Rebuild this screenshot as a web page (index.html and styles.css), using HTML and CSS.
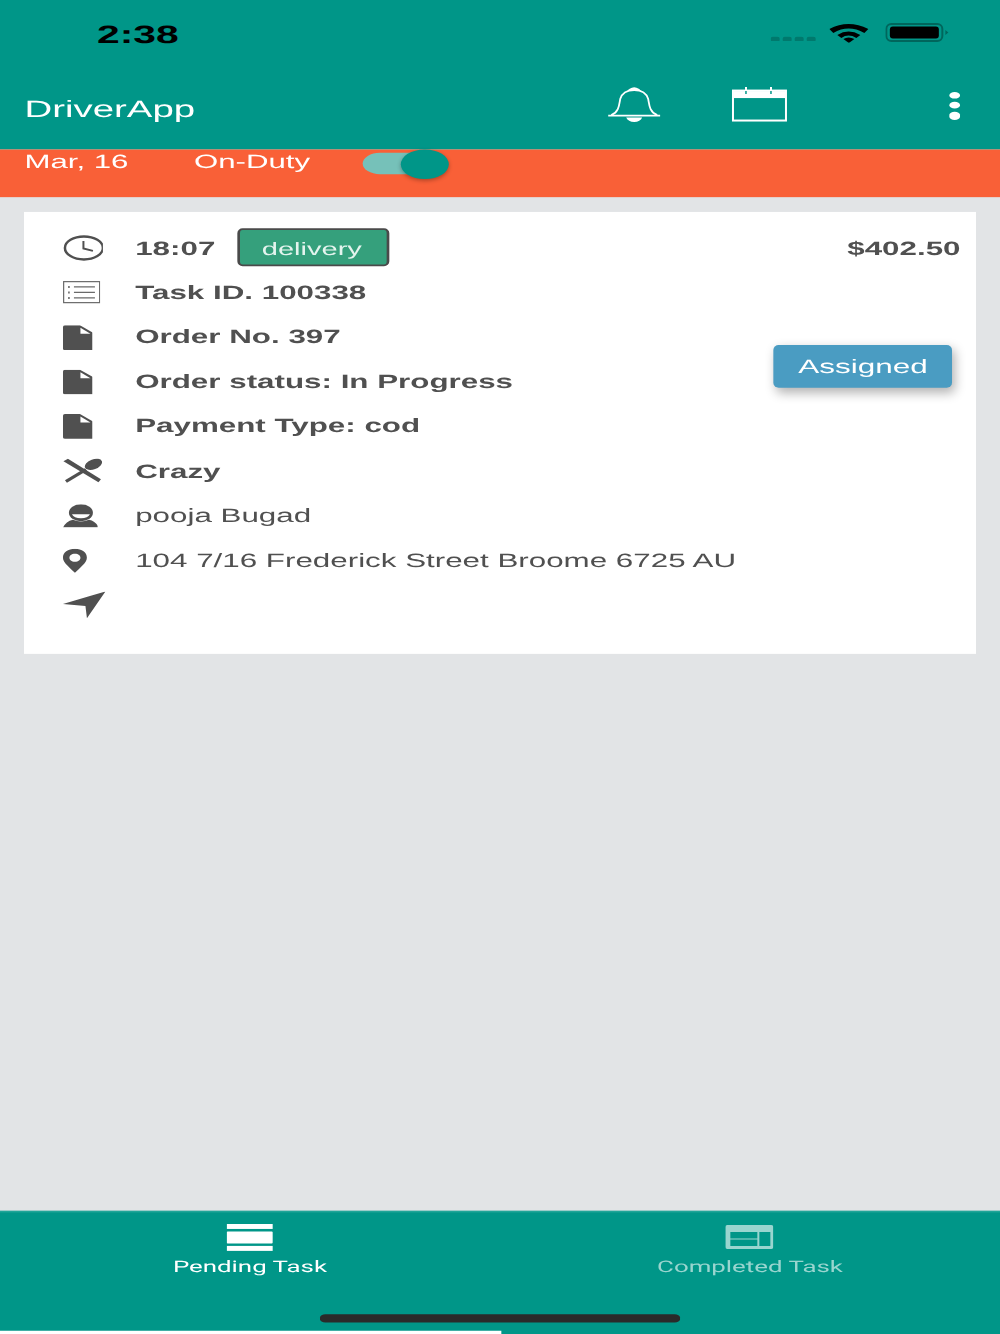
FILE: index.html
```html
<!DOCTYPE html>
<html lang="en">
<head>
    <meta charset="UTF-8">
    <meta name="viewport" content="width=device-width, initial-scale=1.0">
    <title>DriverApp</title>
    <link rel="stylesheet" href="styles.css">
</head>
<body>
    <div class="phone">
        <div class="top-bar">
            <div class="status-bar">
                <span class="clock-text">2:38</span>
                <div class="status-icons">
                    <svg class="ic-signal" preserveAspectRatio="none" viewBox="0 0 46 6"><g fill="#00796d"><rect x="0" y="0.5" width="9" height="5" rx="2"/><rect x="12" y="0.5" width="9" height="5" rx="2"/><rect x="24" y="0.5" width="9" height="5" rx="2"/><rect x="36" y="0.5" width="9" height="5" rx="2"/></g></svg>
                    <svg class="ic-wifi" preserveAspectRatio="none" viewBox="0 0 40 20"><path d="M0 6Q19-4 39 6L35 10Q19 1 4 10Z"/><path d="M8 12Q19 5 31 12L27 15Q19 10 12 15Z"/><path d="M14 16Q19 13 25 16L19.500 20Z"/></svg>
                    <svg class="ic-battery" preserveAspectRatio="none" viewBox="0 0 64 20"><rect x="1" y="1" width="56" height="17" rx="5" fill="none" stroke="#00665c" stroke-width="2"/><rect x="4.500" y="3.500" width="49" height="12" rx="3"/><path d="M60 7L63 9.500L60 12Z" fill="#00665c"/></svg>
                </div>
            </div>

            <div class="nav-bar">
                <span class="app-title">DriverApp</span>
                <svg class="ic-bell" preserveAspectRatio="none" viewBox="0 0 54 36" fill="none" stroke="#fff" stroke-width="1.800">
                    <path d="M1 28.500H53"/>
                    <path d="M4 28C12 25 12 17 13 12C15 5 21 3 27 3C33 3 39 5 41 12C42 17 42 25 50 28"/>
                    <path d="M23 2.500Q27-0.500 31 2.500Z" fill="#fff"/>
                    <path d="M19 30.500H35Q33 35 27 35Q21 35 19 30.500Z" fill="#fff" stroke="none"/>
                </svg>
                <svg class="ic-calendar" preserveAspectRatio="none" viewBox="0 0 56 36" fill="none" stroke="#fff" stroke-width="2">
                    <rect x="1.500" y="3.500" width="53" height="30"/>
                    <rect x="2" y="4" width="52" height="7" fill="#fff" stroke="none"/>
                    <path d="M14.500 0V7M39.500 0V7" stroke-width="2"/>
                    <path d="M14.500 4V7M39.500 4V7" stroke="#009688" stroke-width="1.500"/>
                </svg>
                <div class="more-dots"><i></i><i></i><i></i></div>
            </div>
        </div>

        <div class="duty-bar">
            <span class="duty-date">Mar, 16</span>
            <span class="duty-label">On-Duty</span>
            <div class="toggle"><div class="toggle-track"></div><div class="toggle-thumb"></div></div>
        </div>

        <div class="task-card">
            <div class="task-rows">
                <div class="task-row bold">
                    <div class="row-icon"><svg class="ic-clock" preserveAspectRatio="none" viewBox="0 0 42 26" fill="none" stroke="#505050" stroke-width="2.500"><ellipse cx="21" cy="13" rx="19" ry="11.500"/><path d="M20.500 6V13.500L30 16" stroke-width="2"/></svg></div>
                    <span>18:07</span>
                    <span class="type-badge">delivery</span>
                </div>
                <div class="task-row bold">
                    <div class="row-icon"><svg class="ic-list" preserveAspectRatio="none" viewBox="0 0 38 23" fill="none" stroke="#6a6a6a" stroke-width="1.200"><rect x="0.700" y="0.700" width="36" height="21"/><path d="M11 6H32M11 11.500H32M11 17H32"/><path d="M6 5V7M6 10.500V12.500M6 16V18" stroke-width="1.600"/></svg></div>
                    <span>Task ID. 100338</span>
                </div>
                <div class="task-row bold">
                    <div class="row-icon"><svg class="ic-file" preserveAspectRatio="none" viewBox="0 0 31 25"><use href="#file-shape"/></svg></div>
                    <span>Order No. 397</span>
                </div>
                <div class="task-row bold">
                    <div class="row-icon"><svg class="ic-file" preserveAspectRatio="none" viewBox="0 0 31 25"><use href="#file-shape"/></svg></div>
                    <span>Order status: In Progress</span>
                </div>
                <div class="task-row bold">
                    <div class="row-icon"><svg class="ic-file" preserveAspectRatio="none" viewBox="0 0 31 25"><use href="#file-shape"/></svg></div>
                    <span>Payment Type: cod</span>
                </div>
                <div class="task-row bold">
                    <div class="row-icon"><svg class="ic-food" preserveAspectRatio="none" viewBox="0 0 40 25"><path d="M0.500 3L5 0.500L38 21L35.500 24Z" fill="#505050"/><path d="M2 22L22 10L24 12.500L4 24.500Z" fill="#505050"/><ellipse cx="30.500" cy="6" rx="9" ry="5" transform="rotate(-20 30.500 6)" fill="#505050"/></svg></div>
                    <span>Crazy</span>
                </div>
                <div class="task-row">
                    <div class="row-icon"><svg class="ic-person" preserveAspectRatio="none" viewBox="0 0 36 24"><ellipse cx="18" cy="8.500" rx="12" ry="8.500" fill="#505050"/><path d="M9 10H27Q25 14 18 14Q11 14 9 10Z" fill="#fff"/><path d="M0 23.500Q3 17 10 15.500Q18 19 26 15.500Q33 17 36 23.500Z" fill="#505050"/></svg></div>
                    <span>pooja Bugad</span>
                </div>
                <div class="task-row">
                    <div class="row-icon"><svg class="ic-pin" preserveAspectRatio="none" viewBox="0 0 24 24"><path fill-rule="evenodd" fill="#505050" d="M12 0C19 0 24 3.500 24 9C24 14 16 20 12 24C8 20 0 14 0 9C0 3.500 5 0 12 0ZM12 5C8.500 5 6.500 7 6.500 9C6.500 11 8.500 13 12 13C15.500 13 17.500 11 17.500 9C17.500 7 15.500 5 12 5Z"/></svg></div>
                    <span>104 7/16 Frederick Street Broome 6725 AU</span>
                </div>
                <div class="task-row">
                    <div class="row-icon"><svg class="ic-nav" preserveAspectRatio="none" viewBox="0 0 43 27"><path d="M0 12.500L42.500 0L24 27L22.500 14.500Z" fill="#505050"/></svg></div>
                </div>
            </div>
            <div class="task-side">
                <span class="task-price">$402.50</span>
                <button class="status-btn">Assigned</button>
            </div>
        </div>

        <div class="content-fill"></div>

        <div class="tab-bar">
            <div class="tab-item">
                <svg class="ic-tab" preserveAspectRatio="none" viewBox="0 0 48 28" fill="#fff"><rect x="0" y="0" width="46" height="5"/><rect x="0" y="7.500" width="46" height="12" rx="1"/><rect x="0" y="22" width="46" height="5"/></svg>
                <span>Pending Task</span>
            </div>
            <div class="tab-item inactive">
                <svg class="ic-tab" preserveAspectRatio="none" viewBox="0 0 48 28"><path fill-rule="evenodd" fill="#99d5cf" d="M2 1H46Q48 1 48 3V23Q48 25 46 25H2Q0 25 0 23V3Q0 1 2 1ZM5 8V14.500H32V8ZM5 15.500V22H32V15.500ZM34 8V22H45V8Z"/></svg>
                <span>Completed Task</span>
            </div>
            <div class="tab-indicator"></div>
            <div class="home-bar"></div>
        </div>
    </div>

    <svg class="svg-defs" width="0" height="0"><defs><g id="file-shape"><path d="M2 0H17L31 8V23Q31 25 29 25H2Q0 25 0 23V2Q0 0 2 0Z" fill="#505050"/><path d="M17.500 2.500L27.500 8.500H17.500Z" fill="#fff"/></g></defs></svg>
</body>
</html>
```

FILE: styles.css
```css
/* the screenshot is a 375x812 phone layout stretched to 1000x1334, so lay out at 375x812 and scale */
html, body {
    margin: 0;
    padding: 0;
    overflow: hidden;
}

body {
    width: 1000px;
    height: 1334px;
    background-color: #e2e4e6;
}

.phone {
    width: 375px;
    height: 812px;
    display: flex;
    flex-direction: column;
    transform: scale(2.6667, 1.6429);
    transform-origin: 0 0;
    font-family: "Liberation Sans", Arial, sans-serif;
    color: #505050;
    text-rendering: geometricPrecision;
}

svg {
    display: block;
}

.svg-defs {
    position: absolute;
}

.top-bar {
    height: 90.7px;
    background-color: #009688;
}

.status-bar {
    height: 40px;
    display: flex;
    align-items: center;
    justify-content: space-between;
    padding: 0 19px 0 36.4px;
}

.clock-text {
    font-size: 15.300px;
    font-weight: bold;
    color: #000;
    padding-top: 3px;
}

.status-icons {
    display: flex;
    align-items: center;
}

.ic-signal { width: 17.250px; height: 3.650px; margin-top: 7px; margin-right: 5.600px; }
.ic-wifi { width: 15px; height: 12.170px; margin-right: 5.600px; }
.ic-battery { width: 24px; height: 12.170px; }

.nav-bar {
    height: 50.7px;
    display: flex;
    align-items: center;
    padding: 0 14.9px 0 9.2px;
    color: #fff;
}

.app-title {
    font-size: 14.4px;
    margin-right: auto;
    padding-top: 4px;
}

.ic-bell { width: 20.250px; height: 21.900px; margin-right: 26.200px; margin-top: -3px; transform: translateX(-0.3px); }
.ic-calendar { width: 21px; height: 21.900px; margin-right: 60.550px; margin-top: -3px; transform: translateX(0.3px); }

.more-dots {
    display: flex;
    flex-direction: column;
    gap: 2.100px;
    margin-top: -2.500px;
}

.more-dots i {
    display: block;
    width: 4.500px;
    height: 4.300px;
    border-radius: 50%;
    background-color: #fff;
}

.duty-bar {
    height: 29px;
    box-sizing: border-box;
    padding-top: 1.200px;
    padding-left: 9.2px;
    background-color: #f96037;
    display: flex;
    color: #fff;
    font-size: 11.700px;
    line-height: 14px;
}

.duty-date { width: 63.550px; }
.duty-label { width: 63px; }

.toggle {
    position: relative;
    width: 33px;
    top: -1.200px;
}

.toggle-track {
    position: absolute;
    left: 0;
    top: 2.800px;
    width: 28px;
    height: 12.800px;
    border-radius: 7px;
    background-color: #76c1b9;
}

.toggle-thumb {
    position: absolute;
    left: 14.700px;
    top: 0;
    width: 18px;
    height: 18.300px;
    border-radius: 50%;
    background-color: #009688;
    box-shadow: 0 1px 2px rgba(0,0,0,0.3);
    transform: translateX(0.3px);
}

.task-card {
    margin: 9.300px 9.300px 0 9.100px;
    height: 269px;
    box-sizing: border-box;
    padding: 7.700px 5.500px 0 14.500px;
    background-color: #fff;
    display: flex;
    justify-content: space-between;
}

.task-row {
    height: 27.200px;
    box-sizing: border-box;
    padding-top: 1.600px;
    display: flex;
    align-items: center;
    font-size: 11.750px;
    white-space: nowrap;
}

.task-row.bold {
    font-weight: bold;
}

.row-icon {
    width: 27.100px;
}

/* svg boxes snap to whole layout px, nudge them back onto the reference */
.row-icon svg {
    transform: translateX(-0.4px);
}

.ic-clock { width: 15.750px; height: 15.800px; }
.ic-list { width: 14.250px; height: 14px; }
.ic-file { width: 11.625px; height: 15.200px; }
.ic-food { width: 15px; height: 15.200px; }
.ic-person { width: 13.500px; height: 14.600px; }
.ic-pin { width: 9px; height: 14.600px; }
.ic-nav { width: 16.125px; height: 16.400px; }

.type-badge {
    width: 57.400px;
    height: 22.500px;
    box-sizing: border-box;
    margin-top: -1px;
    margin-left: 8px;
    padding-right: 1px;
    border: 0.800px solid #4a4a4a;
    border-radius: 2px / 3px;
    background-color: #35a07c;
    color: #e4f4ee;
    font-size: 10.900px;
    font-weight: normal;
    text-align: center;
    line-height: 25px;
}

.task-side {
    display: flex;
    flex-direction: column;
    align-items: flex-end;
}

.task-price {
    padding-top: 0.900px;
    font-size: 11.750px;
    font-weight: bold;
    line-height: 27.200px;
}

.status-btn {
    width: 66.400px;
    height: 26px;
    margin-top: 45.300px;
    margin-right: 3.400px;
    padding: 0;
    border: none;
    border-radius: 2px / 3px;
    background-color: #4a9cc2;
    color: #fff;
    font-family: inherit;
    font-size: 11.800px;
    text-rendering: inherit;
    box-shadow: 1px 3px 5px rgba(0,0,0,0.3);
}

.content-fill {
    flex: 1;
}

.tab-bar {
    position: relative;
    height: 75.500px;
    box-sizing: border-box;
    border-top: 1px solid #1fa598;
    background-color: #009688;
    display: flex;
    font-family: Roboto, "Liberation Sans", sans-serif;
    font-size: 9.700px;
    color: #fff;
}

.tab-item {
    flex: 1;
    display: flex;
    flex-direction: column;
    align-items: center;
    padding-top: 7.500px;
}

.tab-item span {
    margin-top: 3.700px;
}

.tab-item.inactive {
    color: #99d5cf;
}

.ic-tab { width: 18px; height: 17px; }

.tab-indicator {
    position: absolute;
    left: 0;
    bottom: 0;
    width: 50%;
    height: 2px;
    background-color: #fff;
}

.home-bar {
    position: absolute;
    left: 120.4px;
    bottom: 7.400px;
    width: 134.200px;
    height: 4.300px;
    border-radius: 2px;
    background-color: #2a2a2a;
}
```
